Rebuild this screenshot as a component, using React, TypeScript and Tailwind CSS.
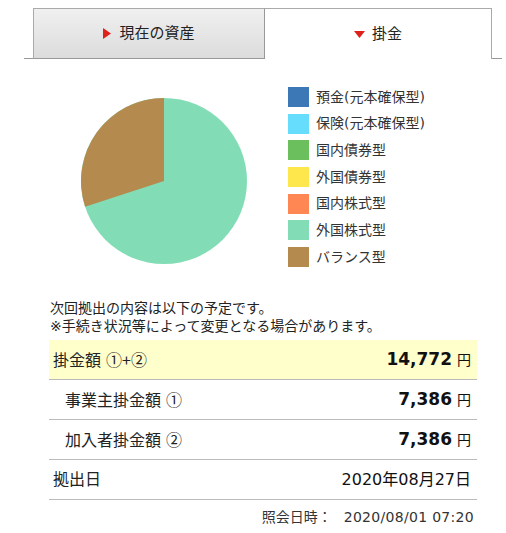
import React from 'react';

const FONT = "font-['DejaVu_Sans','Noto_Sans_CJK_JP',sans-serif]";
const CJK = "font-['Noto_Sans_CJK_JP',sans-serif]";

const LEGEND = [
  { label: '預金(元本確保型)', color: 'bg-[#3d78b6]' },
  { label: '保険(元本確保型)', color: 'bg-[#66ddfd]' },
  { label: '国内債券型', color: 'bg-[#6cbf5d]' },
  { label: '外国債券型', color: 'bg-[#fde74c]' },
  { label: '国内株式型', color: 'bg-[#fe8754]' },
  { label: '外国株式型', color: 'bg-[#82ddb6]' },
  { label: 'バランス型', color: 'bg-[#b48a4e]' },
];

const Pie: React.FC = () => {
  // brown slice ~30%, starting at 12 o'clock going counterclockwise
  const r = 83;
  const a = (108 * Math.PI) / 180;
  const x = 83 - r * Math.sin(a);
  const y = 83 - r * Math.cos(a);
  return (
    <svg width="166" height="166" viewBox="0 0 166 166">
      <circle cx="83" cy="83" r={r} fill="#82ddb6" />
      <path d={`M83 83 L83 0 A${r} ${r} 0 0 0 ${x} ${y} Z`} fill="#b48a4e" />
    </svg>
  );
};

const Row: React.FC<{ label: React.ReactNode; value: React.ReactNode; indent?: boolean; hi?: boolean }> = ({ label, value, indent, hi }) => (
  <div
    className={`flex items-center justify-between h-10 border-b border-[#bbbbbb] pr-[6px] ${indent ? 'pl-[16px]' : 'pl-[4px]'} ${hi ? 'bg-[#ffffcc]' : ''}`}
  >
    <span className="text-[16px] text-[#222]">{label}</span>
    <span className="text-[#111]">{value}</span>
  </div>
);

const Yen: React.FC<{ n: string }> = ({ n }) => (
  <>
    <span className="text-[17px] font-bold">{n}</span>
    <span className="text-[14px] ml-[5px]">円</span>
  </>
);

const App: React.FC = () => {
  return (
    <div className={`w-[506px] h-[533px] bg-white ${FONT} text-[#222] overflow-hidden`}>
      {/* tabs */}
      <div className="pt-[8px] px-[24px] pr-[4px]">
        <div className="flex border-b border-[#999] pl-[9px] pr-[10px]">
          <div className="w-[232px] h-[51px] bg-gradient-to-b from-[#f0f0f0] to-[#dcdcdc] border-t border-l border-[#aaa] border-r border-r-[#999] flex items-center justify-center gap-[8px] -mb-px border-b border-b-[#999]">
            <svg width="8" height="11" viewBox="0 0 8 11"><path d="M0 0 L8 5.5 L0 11 Z" fill="#e0201c" /></svg>
            <span className="text-[15px] text-[#222]">現在の資産</span>
          </div>
          <div className="flex-1 h-[51px] bg-white border-t border-r border-[#aaa] flex items-center justify-center gap-[7px] -mb-px">
            <svg width="11" height="7" viewBox="0 0 11 7"><path d="M0 0 L11 0 L5.5 7 Z" fill="#e0201c" /></svg>
            <span className="text-[15px] text-[#222]">掛金</span>
          </div>
        </div>
      </div>

      {/* chart + legend */}
      <div className="flex mt-[39px] pl-[81px]">
        <Pie />
        <div className="ml-[41px] -mt-[11px] flex flex-col gap-[6.7px]">
          {LEGEND.map(l => (
            <div key={l.label} className="flex items-center h-[20px]">
              <span className={`w-[21px] h-[20px] ${l.color}`} />
              <span className="ml-[7px] text-[14px] text-[#333]">{l.label}</span>
            </div>
          ))}
        </div>
      </div>

      {/* notes */}
      <div className="mt-[32px] pl-[50px] text-[14px] leading-[18px] text-[#222]">
        <p>次回拠出の内容は以下の予定です。</p>
        <p>※手続き状況等によって変更となる場合があります。</p>
      </div>

      <div className="mt-[5px] ml-[49px] w-[428px]">
        <Row label={<>掛金額 <span className={CJK}>①+②</span></>} value={<Yen n="14,772" />} hi />
        <Row label={<>事業主掛金額 <span className={CJK}>①</span></>} value={<Yen n="7,386" />} indent />
        <Row label={<>加入者掛金額 <span className={CJK}>②</span></>} value={<Yen n="7,386" />} indent />
        <Row label="拠出日" value={<span className="text-[16px]">2020年08月27日</span>} />
        <div className="flex justify-end pr-[3px] mt-[7px] text-[14px] text-[#333]">
          <span>照会日時：</span>
          <span className="ml-[12px] tracking-[0.3px]">2020/08/01 07:20</span>
        </div>
      </div>
    </div>
  );
};

export default App;
